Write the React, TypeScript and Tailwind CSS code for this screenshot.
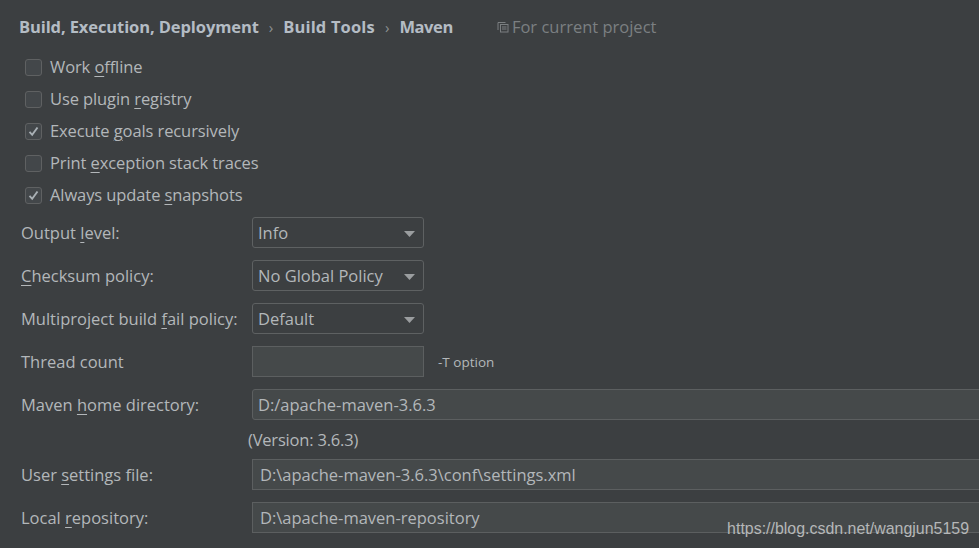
import type { ReactNode } from "react";

const FONT = "font-['Open_Sans','Noto_Sans',sans-serif]";

function Mn({ children }: { children: ReactNode }) {
    return <span className="underline underline-offset-[3px] decoration-1">{children}</span>;
}

function CheckRow({ checked, children }: { checked?: boolean; children: ReactNode }) {
    return (
        <div className="flex h-8 items-center pl-[25px]">
            <div className="flex h-[17px] w-[17px] items-center justify-center rounded-[3px] border border-[#5f6162] bg-[#43474a]">
                {checked && (
                    <svg width="11" height="11" viewBox="0 0 11 11" fill="none">
                        <path d="M1.5 5.8 L4.2 8.8 L9.5 1.5" stroke="#a9b0b5" strokeWidth="1.9" />
                    </svg>
                )}
            </div>
            <span className="ml-2 text-[16.5px] tracking-[-0.1px]">{children}</span>
        </div>
    );
}

function Row({ label, children }: { label: ReactNode; children: ReactNode }) {
    return (
        <div className="flex h-[31px] items-center">
            <div className="w-[252px] shrink-0 pl-[21px] pt-[2px] text-[16.5px]">{label}</div>
            {children}
        </div>
    );
}

function Combo({ value }: { value: string }) {
    return (
        <div className="flex h-[31px] w-[172px] items-center justify-between rounded-[3px] border border-[#5e6162] pl-[5px] pr-[8px] pt-[2px] text-[16.5px]">
            <span>{value}</span>
            <svg width="11" height="6" viewBox="0 0 11 6">
                <path d="M0 0 H11 L5.5 6 Z" fill="#9a9d9f" />
            </svg>
        </div>
    );
}

function Field({ value, rounded }: { value: string; rounded?: boolean }) {
    return (
        <div
            className={
                "flex h-[31px] w-[740px] shrink-0 items-center border border-[#5c5f60] bg-[#45494a] pt-[2px] text-[16.5px] " +
                (rounded ? "rounded-l-[3px] pl-[5px]" : "pl-[7px]")
            }
        >
            {value}
        </div>
    );
}

export default function App() {
    return (
        <div className={`${FONT} relative h-[548px] w-[979px] overflow-hidden bg-[#3c3f41] text-[#b3b7ba]`}>
            {/* Breadcrumb */}
            <div className="flex h-[54px] items-center pl-[19px] text-[16.5px]">
                <span className="font-bold text-[#b4bcc4] tracking-[-0.1px]">Build, Execution, Deployment</span>
                <span className="mx-[10px] text-[15px] text-[#8d9193]">›</span>
                <span className="font-bold text-[#b4bcc4] tracking-[0.15px]">Build Tools</span>
                <span className="mx-[10px] text-[15px] text-[#8d9193]">›</span>
                <span className="font-bold text-[#b4bcc4] tracking-[-0.4px]">Maven</span>
                <svg className="ml-[44px] mr-[3px]" width="12" height="12" viewBox="0 0 12 12" fill="none" stroke="#7b7f81">
                    <path d="M1 9 V1.5 H8.5" />
                    <rect x="3.5" y="3.5" width="7.5" height="7.5" />
                    <path d="M5 6 H9.5 M5 8 H9.5" />
                </svg>
                <span className="text-[#7b7f82]">For current project</span>
            </div>

            {/* Options */}
            <div className="flex flex-col -mt-[3px]">
                <CheckRow>Work <Mn>o</Mn>ffline</CheckRow>
                <CheckRow>Use plugin <Mn>r</Mn>egistry</CheckRow>
                <CheckRow checked>Execute <Mn>g</Mn>oals recursively</CheckRow>
                <CheckRow>Print <Mn>e</Mn>xception stack traces</CheckRow>
                <CheckRow checked>Always update <Mn>s</Mn>napshots</CheckRow>
            </div>

            <div className="mt-[6px] flex flex-col gap-3">
                <Row label={<>Output <Mn>l</Mn>evel:</>}>
                    <Combo value="Info" />
                </Row>
                <Row label={<><Mn>C</Mn>hecksum policy:</>}>
                    <Combo value="No Global Policy" />
                </Row>
                <Row label={<>Multiproject build <Mn>f</Mn>ail policy:</>}>
                    <Combo value="Default" />
                </Row>
                <Row label="Thread count">
                    <div className="h-[31px] w-[172px] border border-[#5c5f60] bg-[#45494a]" />
                    <span className="ml-[14px] pt-[2px] text-[13.5px]">-T option</span>
                </Row>
                <Row label={<>Maven <Mn>h</Mn>ome directory:</>}>
                    <Field value="D:/apache-maven-3.6.3" rounded />
                </Row>
            </div>

            <div className="flex h-[39px] items-center pl-[248px] pt-[2px] text-[16.5px] tracking-[-0.2px]">(Version: 3.6.3)</div>

            <div className="flex flex-col gap-3">
                <Row label={<>User <Mn>s</Mn>ettings file:</>}>
                    <Field value="D:\apache-maven-3.6.3\conf\settings.xml" />
                </Row>
                <Row label={<>Local <Mn>r</Mn>epository:</>}>
                    <Field value="D:\apache-maven-repository" />
                </Row>
            </div>

            {/* Watermark */}
            <div className="absolute bottom-[9px] right-[10px] font-['Liberation_Sans',sans-serif] text-[15.95px] leading-[20px] text-[#b5b7b8]">
                https://blog.csdn.net/wangjun5159
            </div>
        </div>
    );
}
